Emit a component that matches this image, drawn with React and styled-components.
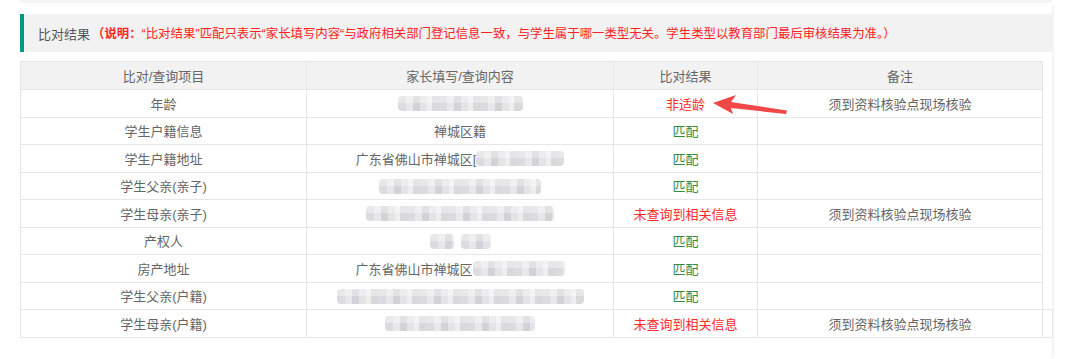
import React from "react";
import styled, { createGlobalStyle } from "styled-components";

const GlobalStyle = createGlobalStyle`
  html, body { margin: 0; padding: 0; background: #ffffff; }
  body {
    font-family: "Liberation Sans", "Noto Sans CJK SC", sans-serif;
    color: #666;
  }
`;

const Page = styled.div`
  position: relative;
  width: 1080px;
  height: 359px;
  padding-left: 20px;
  box-sizing: border-box;
  overflow: hidden;
`;

const TopEdge = styled.div`
  width: 1032px;
  height: 3px;
  background: #f4f4f4;
`;

const Card = styled.div`
  width: 1032px;
  height: 356px;
  box-sizing: border-box;
  padding-top: 11px;
  box-shadow: 3px 0 2px -1px #f3f3f3;
`;

const Notice = styled.div`
  height: 38px;
  background: #f2f2f2;
  border-left: 4px solid #009688;
  padding-left: 14px;
  display: flex;
  align-items: center;
  font-size: 13px;
  white-space: nowrap;
`;

const NoticeTitle = styled.span`
  color: #555;
  margin-right: 2px;
`;

const NoticeNote = styled.span`
  color: #ff2222;
  font-size: 12.4px;
`;

const Strong = styled.b`
  font-weight: 700;
`;

const Table = styled.table`
  margin-top: 9px;
  border-collapse: collapse;
  table-layout: fixed;
  width: 1032px;
  font-size: 13px;
`;

const Th = styled.th`
  height: 27px;
  padding: 0;
  background: #f2f2f2;
  border: 1px solid #e6e6e6;
  color: #666;
  font-weight: 400;
  text-align: center;
`;

const Td = styled.td`
  height: 26.5px;
  padding: 0;
  border: 1px solid #e6e6e6;
  text-align: center;
  white-space: nowrap;
  color: ${(p) =>
    p.$status === "ok" ? "#358a3c" : p.$status === "bad" ? "#ff2a2a" : "#666"};
`;

const Filler = styled.td`
  padding: 0;
  border: none;
  border-left: 1px solid #e6e6e6;
  ${(p) => p.$visible && "border: 1px solid #e6e6e6;"}
`;

const FillerHead = styled.th`
  padding: 0;
  border: none;
  border-left: 1px solid #e6e6e6;
`;

const Cell = styled.span`
  display: inline-flex;
  align-items: center;
  vertical-align: middle;
  gap: ${(p) => p.$gap || 0}px;
`;

const Blur = styled.span`
  display: inline-block;
  width: ${(p) => p.$w}px;
  height: 15px;
  border-radius: 4px;
  background:
    linear-gradient(180deg, rgba(255,255,255,0.35) 0 50%, rgba(255,255,255,0) 50% 100%),
    repeating-linear-gradient(
      90deg,
      #dcdce0 0 8px,
      #e8e8ea 8px 15px,
      #d3d3d7 15px 22px,
      #e4e4e6 22px 29px,
      #eeeeef 29px 34px,
      #d9d9dc 34px 41px
    );
  filter: blur(0.6px);
`;

const ArrowSvg = styled.svg`
  position: absolute;
  left: 705px;
  top: 90px;
`;

const rows = [
  { item: "年龄", content: [{ b: 125 }], result: "非适龄", status: "bad", note: "须到资料核验点现场核验" },
  { item: "学生户籍信息", content: [{ t: "禅城区籍" }], result: "匹配", status: "ok" },
  { item: "学生户籍地址", content: [{ t: "广东省佛山市禅城区[" }, { b: 88 }], result: "匹配", status: "ok" },
  { item: "学生父亲(亲子)", content: [{ b: 162 }], result: "匹配", status: "ok" },
  { item: "学生母亲(亲子)", content: [{ b: 188 }], result: "未查询到相关信息", status: "bad", note: "须到资料核验点现场核验" },
  { item: "产权人", content: [{ b: 24 }, { b: 30 }], gap: 7, result: "匹配", status: "ok" },
  { item: "房产地址", content: [{ t: "广东省佛山市禅城区" }, { b: 92 }], result: "匹配", status: "ok" },
  { item: "学生父亲(户籍)", content: [{ b: 247 }], result: "匹配", status: "ok" },
  { item: "学生母亲(户籍)", content: [{ b: 150 }], result: "未查询到相关信息", status: "bad", note: "须到资料核验点现场核验" },
];

export default function App() {
  return (
    <Page>
      <GlobalStyle />
      <TopEdge />
      <Card>
        <Notice>
          <NoticeTitle>比对结果</NoticeTitle>
          <NoticeNote>
            <Strong>（说明：</Strong>“比对结果"匹配只表示“家长填写内容“与政府相关部门登记信息一致，与学生属于哪一类型无关。学生类型以教育部门最后审核结果为准。）
          </NoticeNote>
        </Notice>
        <Table>
          <colgroup>
            <col style={{ width: 286 }} />
            <col style={{ width: 307 }} />
            <col style={{ width: 144 }} />
            <col style={{ width: 285 }} />
            <col style={{ width: 10 }} />
          </colgroup>
          <thead>
            <tr>
              <Th>比对/查询项目</Th>
              <Th>家长填写/查询内容</Th>
              <Th>比对结果</Th>
              <Th>备注</Th>
              <FillerHead />
            </tr>
          </thead>
          <tbody>
            {rows.map((r, i) => (
              <tr key={r.item}>
                <Td>{r.item}</Td>
                <Td>
                  <Cell $gap={r.gap}>
                    {r.content.map((c, j) =>
                      c.t ? <span key={j}>{c.t}</span> : <Blur key={j} $w={c.b} />
                    )}
                  </Cell>
                </Td>
                <Td $status={r.status}>{r.result}</Td>
                <Td>{r.note || ""}</Td>
                <Filler $visible={i === rows.length - 1} />
              </tr>
            ))}
          </tbody>
        </Table>
      </Card>
      <ArrowSvg width="90" height="30" viewBox="0 0 90 30">
        <polygon
          points="8,13 31,5 26,12 82,20.5 81,24 26,18 28,24"
          fill="#f04848"
        />
      </ArrowSvg>
    </Page>
  );
}
